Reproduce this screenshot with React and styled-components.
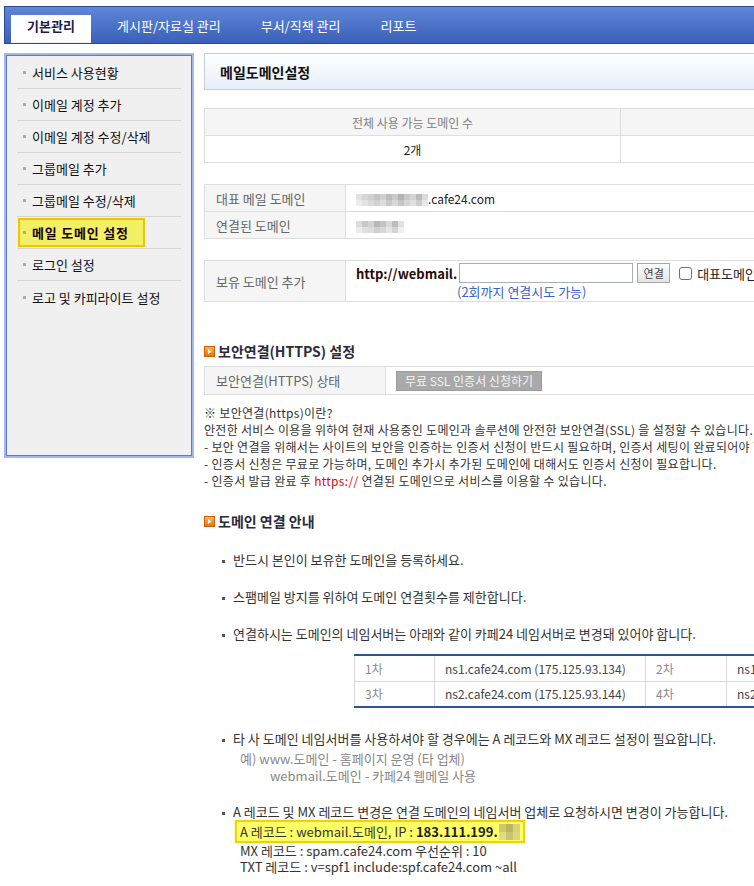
import React from 'react'
import styled, { createGlobalStyle } from 'styled-components'

const GlobalStyle = createGlobalStyle`
  * { box-sizing: border-box; }
  html, body {
    margin: 0;
    padding: 0;
    overflow: hidden;
    background: #fff;
  }
  body {
    font-family: "Noto Sans CJK KR", "Noto Sans", sans-serif;
    font-size: 12px;
    color: #333;
  }
`

const tabs = ['기본관리', '게시판/자료실 관리', '부서/직책 관리', '리포트']

const menu = [
  '서비스 사용현황',
  '이메일 계정 추가',
  '이메일 계정 수정/삭제',
  '그룹메일 추가',
  '그룹메일 수정/삭제',
  '메일 도메인 설정',
  '로그인 설정',
  '로고 및 카피라이트 설정',
]
const ACTIVE_MENU = 5

// pixelated (blurred) parts of the screenshot
const mosaicMain = [
  '#e2e2e2', '#d6d6d6', '#cfcfcf', '#c4c4c4', '#d0d0d0', '#bdbdbd', '#cacaca', '#b4b4b4', '#c8c8c8', '#d4d4d4', '#bcbcbc', '#dcdcdc',
  '#ececec', '#e4e4e4', '#dadada', '#d2d2d2', '#dedede', '#c9c9c9', '#d8d8d8', '#c6c6c6', '#d6d6d6', '#e0e0e0', '#cccccc', '#e8e8e8',
]
const mosaicLinked = [
  '#dcdcdc', '#c8c8c8', '#d2d2d2', '#b8b8b8', '#c4c4c4', '#dadada', '#bebebe', '#e2e2e2',
  '#ececec', '#e0e0e0', '#dcdcdc', '#d0d0d0', '#d8d8d8', '#e6e6e6', '#d4d4d4', '#f0f0f0',
]
const mosaicIp = ['#cfc86a', '#bdb65e', '#d8d276', '#e2dc80', '#cbc46a', '#ddd77c']

const nameServers = [
  ['1차', 'ns1.cafe24.com (175.125.93.134)', '2차', 'ns1.cafe24.net (175.125.93.135)'],
  ['3차', 'ns2.cafe24.com (175.125.93.144)', '4차', 'ns2.cafe24.net (175.125.93.145)'],
]

const Page = styled.div`
  width: 1000px;
  padding: 6px 0 0 4px;
`

const TabBar = styled.ul`
  display: flex;
  align-items: flex-end;
  height: 38px;
  margin: 0;
  padding: 0 0 0 6px;
  list-style: none;
  border: 1px solid #2c4996;
  background: linear-gradient(#5f86d8, #3b60b8);
`

const Tab = styled.li`
  height: 28px;
  line-height: 22px;
  width: ${({ $active }) => ($active ? '80px' : 'auto')};
  padding: ${({ $active }) => ($active ? '0' : '0 20px')};
  margin-right: ${({ $active }) => ($active ? '6px' : '0')};
  text-align: center;
  white-space: nowrap;
  font-size: 13px;
  font-weight: ${({ $active }) => ($active ? 700 : 400)};
  color: ${({ $active }) => ($active ? '#1d1d4d' : '#fff')};
  background: ${({ $active }) => ($active ? '#fff' : 'transparent')};
  border-bottom: ${({ $active }) => ($active ? '1px solid #eceff5' : 'none')};
`

const Columns = styled.div`
  display: flex;
  align-items: flex-start;
  gap: 10px;
  margin-top: 9px;
`

const Sidebar = styled.ul`
  flex: none;
  width: 190px;
  height: 405px;
  margin: 0;
  padding: 2px 11px;
  list-style: none;
  background: #f0f0f0;
  border: 2px solid #a3b8ee;
  box-shadow: inset 0 0 0 1px #5a7bd3;
`

const MenuItem = styled.li`
  display: flex;
  align-items: center;
  height: 32px;
  border-bottom: 1px solid #d5d5d5;
  &:last-child { border-bottom: none; }
`

const MenuLabel = styled.span`
  display: flex;
  align-items: center;
  gap: 6px;
  white-space: nowrap;
  font-size: 13px;
  letter-spacing: ${({ $active }) => ($active ? '0.8px' : '0')};
  color: ${({ $active }) => ($active ? '#1a0000' : '#111')};
  font-weight: ${({ $active }) => ($active ? 700 : 400)};
  padding-left: ${({ $active }) => ($active ? '3px' : '6px')};
  margin-left: ${({ $active }) => ($active ? '1px' : '0')};
  width: ${({ $active }) => ($active ? '127px' : 'auto')};
  height: ${({ $active }) => ($active ? '29px' : 'auto')};
  background: ${({ $active }) => ($active ? '#f2f064' : 'transparent')};
  border: ${({ $active }) => ($active ? '2px solid #f1c300' : 'none')};
  &::before {
    content: '';
    width: 3px;
    height: 3px;
    background: #aaa;
    flex: none;
  }
`

const Main = styled.div`
  flex: none;
  width: 720px;
`

const TitleBox = styled.div`
  display: flex;
  align-items: center;
  height: 37px;
  padding-left: 15px;
  border: 1px solid #c6cee0;
  background: linear-gradient(#fdfeff, #e8eef9);
  font-size: 14px;
  font-weight: 700;
  color: #111;
`

const InfoTable = styled.table`
  width: 100%;
  margin-top: ${({ $top }) => $top}px;
  border-collapse: collapse;
  td {
    border: 1px solid #dedede;
    height: ${({ $row }) => $row || 27}px;
    padding: 0 10px;
    white-space: nowrap;
  }
`

const HeadCell = styled.td`
  background: #f5f5f5;
  color: #808080;
  text-align: center;
  width: ${({ $w }) => ($w ? `${$w}px` : 'auto')};
`

const CenterCell = styled.td`
  text-align: center;
  color: #222;
`

const LabelCell = styled.td`
  width: ${({ $w }) => $w}px;
  background: #f5f5f5;
  color: #666;
  font-size: 13px;
  && { padding-left: 11px; }
`

const ValueCell = styled.td`
  color: #222;
`

const Mosaic = styled.span`
  display: inline-grid;
  grid-template-columns: repeat(${({ $cols }) => $cols}, ${({ $w }) => $w}px);
  grid-auto-rows: ${({ $h }) => $h}px;
  vertical-align: middle;
`

const Cell = styled.span`
  background: ${({ $c }) => $c};
`

const AddRow = styled.div`
  display: flex;
  align-items: center;
  height: 20px;
  font-size: 13px;
`

const Prefix = styled.span`
  font-weight: 700;
  color: #2a0808;
  margin-right: 2px;
`

const DomainInput = styled.input`
  width: 174px;
  height: 20px;
  border: 1px solid #a9aeb6;
  padding: 0 3px;
  font: inherit;
`

const SmallButton = styled.button`
  width: 33px;
  height: 20px;
  margin-left: 4px;
  padding: 0;
  border: 1px solid #a6a6a6;
  background: linear-gradient(#fdfdfd, #e4e4e4);
  color: #444;
  font-family: inherit;
  font-size: 11px;
`

const CheckBox = styled.span`
  width: 13px;
  height: 13px;
  margin: 0 5px 0 9px;
  border: 1px solid #707070;
  border-radius: 3px;
  background: #fff;
  flex: none;
`

const Hint = styled.div`
  margin: 2px 0 0 101px;
  color: #3a62cc;
  font-size: 13px;
  line-height: 14px;
`

const SectionTitle = styled.h3`
  display: flex;
  align-items: center;
  gap: 3px;
  margin: ${({ $top }) => $top}px 0 0;
  height: 16px;
  font-size: 14px;
  font-weight: 700;
  color: #2b2b3b;
`

const GrayButton = styled.span`
  display: inline-flex;
  align-items: center;
  justify-content: center;
  width: 146px;
  height: 20px;
  background: #a9a9a9;
  border: 1px solid #9c9c9c;
  color: #f4f4f4;
`

const Notes = styled.div`
  margin-top: 9px;
  line-height: 17px;
  letter-spacing: 0.3px;
  color: #333;
  white-space: nowrap;
`

const Red = styled.span`
  color: #e8000b;
`

const Guide = styled.ul`
  margin: 22px 0 0;
  padding: 0 0 0 29px;
  list-style: none;
  font-size: 13px;
  li {
    line-height: 17px;
    margin-top: 20px;
    white-space: nowrap;
  }
  li:first-child { margin-top: 0; }
  li::before {
    content: '';
    display: inline-block;
    width: 3px;
    height: 3px;
    margin: 0 8px 0 -11px;
    background: #555;
    vertical-align: middle;
  }
`

const NsTable = styled.table`
  margin: 12px 0 0 121px;
  border-collapse: collapse;
  border-top: 2px solid #2c5597;
  border-bottom: 2px solid #2c5597;
  font-size: 12px;
  td {
    height: 26px;
    padding: 0 10px;
    border: 1px solid #d8d8d8;
    border-top-color: #e2e2e2;
    color: #444;
    white-space: nowrap;
  }
`

const OrderCell = styled.td`
  width: ${({ $w }) => $w}px;
  && { color: #888; }
`

const SubLine = styled.div`
  color: #888;
  line-height: 17px;
  padding-left: ${({ $indent }) => $indent}px;
  margin-top: ${({ $gap }) => $gap || 0}px;
`

const RecordBox = styled.div`
  display: inline-flex;
  align-items: center;
  height: 23px;
  margin: 0 0 0 2px;
  padding: 0 3px;
  background: #ffff66;
  border: 2px solid #f3d00c;
  box-shadow: 0 0 1px #f0d000;
`

const Bold = styled.b`
  font-weight: 700;
  color: #222;
  margin-right: 1px;
`

const RecordLine = styled.div`
  line-height: 16px;
  padding-left: 7px;
`

const ArrowIcon = () => (
  <svg width="11" height="11" viewBox="0 0 11 11">
    <defs>
      <linearGradient id="og" x1="0" y1="0" x2="0" y2="1">
        <stop offset="0" stopColor="#fbbd4a" />
        <stop offset="1" stopColor="#e66d10" />
      </linearGradient>
    </defs>
    <rect x="0.5" y="0.5" width="10" height="10" fill="url(#og)" stroke="#cf5e06" />
    <path d="M4 3 L7.5 5.5 L4 8 Z" fill="#fff" />
  </svg>
)

const Blur = ({ cells, cols, w, h }) => (
  <Mosaic $cols={cols} $w={w} $h={h}>
    {cells.map((c, i) => (
      <Cell key={i} $c={c} />
    ))}
  </Mosaic>
)

const App = () => {
  return (
    <Page>
      <GlobalStyle />
      <TabBar>
        {tabs.map((t, i) => (
          <Tab key={t} $active={i === 0}>{t}</Tab>
        ))}
      </TabBar>

      <Columns>
        <Sidebar>
          {menu.map((m, i) => (
            <MenuItem key={m}>
              <MenuLabel $active={i === ACTIVE_MENU}>{m}</MenuLabel>
            </MenuItem>
          ))}
        </Sidebar>

        <Main>
          <TitleBox>메일도메인설정</TitleBox>

          {/* domain count */}
          <InfoTable $top={18}>
            <tbody>
              <tr>
                <HeadCell $w={416}>전체 사용 가능 도메인 수</HeadCell>
                <HeadCell></HeadCell>
              </tr>
              <tr>
                <CenterCell>2개</CenterCell>
                <CenterCell></CenterCell>
              </tr>
            </tbody>
          </InfoTable>

          {/* current domains */}
          <InfoTable $top={21}>
            <tbody>
              <tr>
                <LabelCell $w={141}>대표 메일 도메인</LabelCell>
                <ValueCell>
                  <Blur cells={mosaicMain} cols={12} w={6} h={6} />.cafe24.com
                </ValueCell>
              </tr>
              <tr>
                <LabelCell $w={141}>연결된 도메인</LabelCell>
                <ValueCell>
                  <Blur cells={mosaicLinked} cols={8} w={6} h={6} />
                </ValueCell>
              </tr>
            </tbody>
          </InfoTable>

          {/* add domain */}
          <InfoTable $top={21} $row={41}>
            <tbody>
              <tr>
                <LabelCell $w={141}>보유 도메인 추가</LabelCell>
                <ValueCell>
                  <AddRow>
                    <Prefix>http://webmail.</Prefix>
                    <DomainInput type="text" />
                    <SmallButton type="button">연결</SmallButton>
                    <CheckBox />
                    대표도메인으로 설정
                  </AddRow>
                  <Hint>(2회까지 연결시도 가능)</Hint>
                </ValueCell>
              </tr>
            </tbody>
          </InfoTable>

          <SectionTitle $top={41}>
            <ArrowIcon />
            보안연결(HTTPS) 설정
          </SectionTitle>
          <InfoTable $top={7} $row={28}>
            <tbody>
              <tr>
                <LabelCell $w={181}>보안연결(HTTPS) 상태</LabelCell>
                <ValueCell>
                  <GrayButton>무료 SSL 인증서 신청하기</GrayButton>
                </ValueCell>
              </tr>
            </tbody>
          </InfoTable>

          <Notes>
            <div>※ 보안연결(https)이란?</div>
            <div>안전한 서비스 이용을 위하여 현재 사용중인 도메인과 솔루션에 안전한 보안연결(SSL) 을 설정할 수 있습니다.</div>
            <div>- 보안 연결을 위해서는 사이트의 보안을 인증하는 인증서 신청이 반드시 필요하며, 인증서 세팅이 완료되어야 합니다.</div>
            <div>- 인증서 신청은 무료로 가능하며, 도메인 추가시 추가된 도메인에 대해서도 인증서 신청이 필요합니다.</div>
            <div>- 인증서 발급 완료 후 <Red>https://</Red> 연결된 도메인으로 서비스를 이용할 수 있습니다.</div>
          </Notes>

          <SectionTitle $top={24}>
            <ArrowIcon />
            도메인 연결 안내
          </SectionTitle>

          <Guide>
            <li>반드시 본인이 보유한 도메인을 등록하세요.</li>
            <li>스팸메일 방지를 위하여 도메인 연결횟수를 제한합니다.</li>
            <li>
              연결하시는 도메인의 네임서버는 아래와 같이 카페24 네임서버로 변경돼 있어야 합니다.
              <NsTable>
                <tbody>
                  {nameServers.map((row) => (
                    <tr key={row[0]}>
                      <OrderCell $w={80}>{row[0]}</OrderCell>
                      <td style={{ width: 211 }}>{row[1]}</td>
                      <OrderCell $w={81}>{row[2]}</OrderCell>
                      <td>{row[3]}</td>
                    </tr>
                  ))}
                </tbody>
              </NsTable>
            </li>
            <li style={{ marginTop: 22 }}>
              타 사 도메인 네임서버를 사용하셔야 할 경우에는 A 레코드와 MX 레코드 설정이 필요합니다.
              <SubLine $indent={7} $gap={3}>예) www.도메인 - 홈페이지 운영 (타 업체)</SubLine>
              <SubLine $indent={37}>webmail.도메인 - 카페24 웹메일 사용</SubLine>
            </li>
            <li style={{ marginTop: 19 }}>
              A 레코드 및 MX 레코드 변경은 연결 도메인의 네임서버 업체로 요청하시면 변경이 가능합니다.
              <div>
                <RecordBox>
                  A 레코드 : webmail.도메인, IP : <Bold>&nbsp;183.111.199.</Bold>
                  <Blur cells={mosaicIp} cols={3} w={7} h={8} />
                </RecordBox>
              </div>
              <RecordLine>MX 레코드 : spam.cafe24.com 우선순위 : 10</RecordLine>
              <RecordLine>TXT 레코드 : v=spf1 include:spf.cafe24.com ~all</RecordLine>
            </li>
          </Guide>
        </Main>
      </Columns>
    </Page>
  )
}

export default App
